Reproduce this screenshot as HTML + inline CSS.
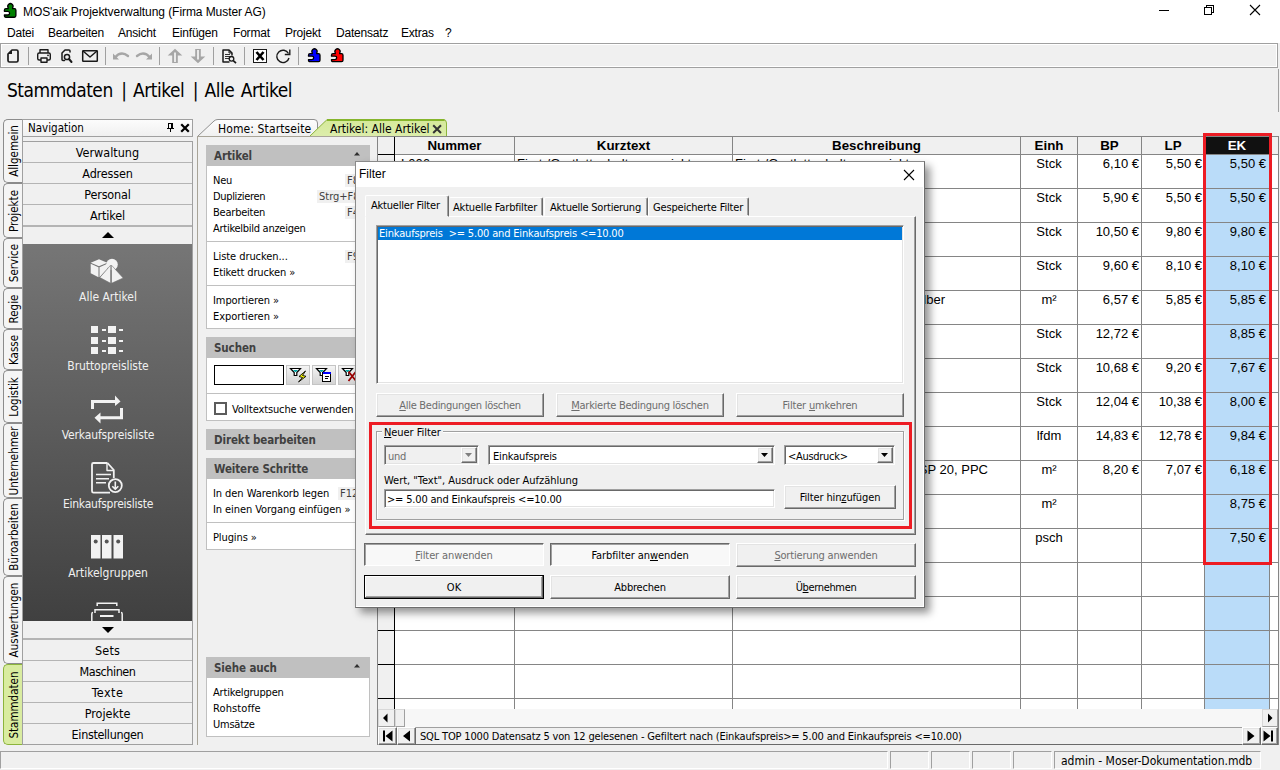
<!DOCTYPE html>
<html lang="de"><head><meta charset="utf-8"><title>MOS'aik Projektverwaltung</title>
<style>
*{box-sizing:border-box;margin:0;padding:0}
html,body{width:1280px;height:770px;overflow:hidden;background:#f0f0f0}
body{position:relative;font-family:"DejaVu Sans Condensed","Liberation Sans",sans-serif;font-size:11px;color:#000}
.a{position:absolute}
.t{position:absolute;white-space:nowrap;line-height:1}
.ui{font-family:"Liberation Sans",sans-serif}
svg{position:absolute;overflow:visible}
/* title + menu */
#title{left:0;top:0;width:1280px;height:22px;background:#fff}
#menu{left:0;top:22px;width:1280px;height:21px;background:#fff}
#menu .t{top:5px;font-size:12px;letter-spacing:-0.2px}
#toolbar{left:0;top:43px;width:1278px;height:25px;background:#f0f0f0;border:1px solid #a0a0a0;box-shadow:inset 1px 1px 0 #fff,inset -1px -1px 0 #fff}
#heading{left:7px;top:81px;font-size:19px;letter-spacing:-0.5px;word-spacing:1.6px}
#heading i{font-style:normal;margin-left:2px}
/* nav */
.vtab{position:absolute;left:3px;width:20px;background:#f5f5f5;border:1px solid #8c8c8c;border-right:0;border-radius:5px 0 0 5px}
.vtab span{position:absolute;left:calc(50% + 1px);top:50%;transform:translate(-50%,-50%) rotate(-90deg);white-space:nowrap;font-size:11.5px;line-height:1}
.navitem{position:absolute;left:23px;width:169px;height:21px;border-bottom:1px solid #b4b4b4;text-align:center;font-size:12.5px;line-height:22px;background:#f0f0f0}
.navlab{letter-spacing:-0.12px;position:absolute;left:23px;width:170px;text-align:center;color:#f0f0f0;font-size:12px;line-height:1;white-space:nowrap}
/* tabs/taskpane */
.ph{position:absolute;left:206px;width:164px;height:21px;background:#c0c0c0;color:#404040;font-weight:bold;font-size:11.5px;line-height:22px;padding-left:8px;letter-spacing:-0.1px}
.pb{position:absolute;left:206px;width:164px;background:#fff;border:1px solid #c0c0c0;border-top:0}
.pi{position:absolute;left:213px;white-space:nowrap;line-height:1;font-size:11px}
.sep{position:absolute;left:207px;width:162px;height:1px;background:#c0c0c0}
.sk{position:absolute;white-space:nowrap;line-height:13px;font-size:11px;background:#f0f0f0;color:#404040;padding:0 2px}
/* grid */
#grid{position:absolute;left:377px;top:136px;width:901px;height:573px;background:#fff;overflow:hidden}
.gl{position:absolute;background:#858585}
.gh{position:absolute;top:138px;text-align:center;font:bold 13.33px "Liberation Sans",sans-serif;line-height:15px;white-space:nowrap}
.gc{position:absolute;font:13px "Liberation Sans",sans-serif;line-height:15px;white-space:nowrap}
.r{text-align:right}.c{text-align:center}
/* classic controls */
.btn{position:absolute;background:#f0f0f0;border:1px solid;border-color:#fff #696969 #696969 #fff;box-shadow:inset -1px -1px 0 #a0a0a0,inset 1px 1px 0 #e3e3e3;text-align:center;font-size:11px;white-space:nowrap}
.btn.dis{color:#6d6d6d}
.sunk{position:absolute;background:#fff;border:1px solid;border-color:#a0a0a0 #fff #fff #a0a0a0;box-shadow:inset 1px 1px 0 #696969,inset -1px -1px 0 #e3e3e3}
u{text-decoration:underline;text-underline-offset:1px}
.dt{font-size:11px;letter-spacing:-0.17px}
.btn.pressed{border-color:#696969 #fff #fff #696969;box-shadow:inset 1px 1px 0 #a0a0a0;background:#f8f8f8}
.fb{position:absolute;top:365px;width:24px;height:20px;border:1px solid #c4c4c4;background:linear-gradient(#f4f4f4,#d4d4d4)}
.sp{position:absolute;top:751px;height:18px;border:1px solid;border-color:#a0a0a0 #fff #fff #a0a0a0}
.sb{position:absolute;background:#f0f0f0;border:1px solid;border-color:#d8d8d8 #a0a0a0 #a0a0a0 #d8d8d8}
</style></head><body>
<div id="title" class="a">
 <div class="t ui" style="left:23px;top:6px;font-size:12px;letter-spacing:-0.07px">MOS'aik Projektverwaltung (Firma Muster AG)</div>
</div>
<div id="menu" class="a ui">
 <div class="t" style="left:7px">Datei</div>
 <div class="t" style="left:48px">Bearbeiten</div>
 <div class="t" style="left:118px">Ansicht</div>
 <div class="t" style="left:172px">Einfügen</div>
 <div class="t" style="left:233px">Format</div>
 <div class="t" style="left:285px">Projekt</div>
 <div class="t" style="left:336px">Datensatz</div>
 <div class="t" style="left:401px">Extras</div>
 <div class="t" style="left:445px">?</div>
</div>
<div id="toolbar" class="a"></div>
<div id="heading" class="t">Stammdaten <i>|</i> Artikel <i>|</i> Alle Artikel</div>
<!-- title icon + window buttons -->
<svg style="left:0;top:0" width="1280" height="22" viewBox="0 0 1280 22">
 <g id="pz" style="color:#008000" transform="translate(-0.100,-1.500) scale(1,1.070)">
  <path d="M8.300 9.500 V8.700 A2.600 2.600 0 1 1 12.700 8.700 V9.500 H14.500 Q16 9.500 16 11 V16 Q16 17.500 14.500 17.500 H6 Q4.500 17.500 4.500 16 V15.400 H8 A1.700 1.700 0 0 0 8 12 H4.500 V11 Q4.500 9.500 6 9.500 Z" fill="currentColor" stroke="#000" stroke-width="1.300" stroke-linejoin="round"/>
 </g>
 <path d="M1159 10.5 H1169" stroke="#000" stroke-width="1"/>
 <path d="M1204.5 7.5 h7 v7 h-7 Z M1206.5 7.5 v-2 h7 v7 h-2" stroke="#000" stroke-width="1" fill="none" shape-rendering="crispEdges"/>
 <path d="M1250 5 L1260 15 M1260 5 L1250 15" stroke="#000" stroke-width="1.1" fill="none"/>
</svg>
<!-- toolbar icons -->
<svg style="left:0;top:44px" width="360" height="24" viewBox="0 44 360 24">
 <g stroke="#a0a0a0" stroke-width="1" shape-rendering="crispEdges"><path d="M28.5 47 V65 M105.5 47 V65 M159.5 47 V65 M213.5 47 V65 M244.5 47 V65 M298.5 47 V65"/></g>
 <!-- new -->
 <path d="M12 50 H16.5 Q18 50 18 51.5 V60.5 Q18 62 16.5 62 H9.5 Q8 62 8 60.5 V54 Z" fill="none" stroke="#1a1a1a" stroke-width="1.7" stroke-linejoin="round"/>
 <path d="M8 54 L12 54 L12 50 Z" fill="#1a1a1a"/>
 <!-- print -->
 <g fill="none" stroke="#1a1a1a" stroke-width="1.4" stroke-linejoin="round">
  <path d="M40 53 V49.7 H48 V53"/>
  <rect x="37.7" y="53" width="12.6" height="7" rx="1.5"/>
  <rect x="41" y="58" width="6" height="4.3" fill="#f0f0f0"/>
 </g>
 <circle cx="48" cy="55.3" r="0.9" fill="#1a1a1a"/>
 <!-- preview -->
 <g fill="none" stroke="#1a1a1a" stroke-width="1.5" stroke-linejoin="round" stroke-linecap="round">
  <path d="M64.5 60.5 H63 Q62 60.500 62 59.500 V53 L65 50 H69 Q70 50 70 51 V52"/>
  <circle cx="67" cy="57" r="2.6"/>
  <path d="M69 59 L71.500 62" stroke-width="2"/>
 </g>
 <!-- mail -->
 <g fill="none" stroke="#1a1a1a" stroke-width="1.5" stroke-linejoin="round">
  <rect x="82.7" y="50.700" width="14.600" height="10.600" rx="0.500"/>
  <path d="M83 51 L90 57 L97 51"/>
 </g>
 <!-- undo / redo -->
 <g fill="none" stroke="#a6a6a6" stroke-width="2.400" stroke-linecap="round">
  <path d="M115 57.5 Q121 50.500 128 56"/>
  <path d="M150 57.5 Q144 50.500 137 56"/>
 </g>
 <path d="M113 53.5 L113 59.500 L119 59.500 Z M152 53.5 L152 59.500 L146 59.500 Z" fill="#a6a6a6"/>
 <!-- up / down -->
 <path d="M175 48.800 L182.300 55.500 H177.800 V63 H172.200 V55.500 H167.700 Z M198 63.200 L205.300 56.500 H200.800 V49 H195.200 V56.500 H190.700 Z" fill="#a6a6a6"/>
 <path d="M175 52.500 V62 M198 50 V59.500" stroke="#fff" stroke-width="1.500" fill="none"/>
 <!-- doc search -->
 <g fill="none" stroke="#1a1a1a" stroke-width="1.500" stroke-linejoin="round">
  <path d="M229.500 62 H223 V50 H229 L232 53 V55.500"/>
  <path d="M229 50 V53 H232" stroke-width="1"/>
 </g>
 <g shape-rendering="crispEdges" fill="#333"><rect x="225" y="54" width="5" height="1"/><rect x="225" y="56" width="5" height="1"/><rect x="225" y="58" width="4" height="1"/></g>
 <circle cx="231.500" cy="58.800" r="2.300" fill="#f0f0f0" stroke="#1a1a1a" stroke-width="1.300"/>
 <path d="M233.300 60.600 L236 63.200" stroke="#1a1a1a" stroke-width="1.700"/>
 <!-- excel -->
 <rect x="253.500" y="49.500" width="13" height="13" fill="#fff" stroke="#1a1a1a" stroke-width="1"/>
 <path d="M256.500 52 L263.500 60 M263.500 52 L256.500 60" stroke="#000" stroke-width="2.600" fill="none"/>
 <!-- refresh -->
 <path d="M288.500 53.5 A6.200 6.200 0 1 0 289 58" fill="none" stroke="#1a1a1a" stroke-width="1.400"/>
 <path d="M289.800 49.500 V54.500 H284.800" fill="none" stroke="#1a1a1a" stroke-width="1.400"/>
 <!-- puzzles -->
 <g style="color:#0000ff" transform="translate(304,44.150)">
  <path d="M8.300 9.500 V8.700 A2.600 2.600 0 1 1 12.700 8.700 V9.500 H14.500 Q16 9.500 16 11 V16 Q16 17.500 14.500 17.500 H6 Q4.500 17.500 4.500 16 V15.400 H8 A1.700 1.700 0 0 0 8 12 H4.500 V11 Q4.500 9.500 6 9.500 Z" fill="currentColor" stroke="#000" stroke-width="1.300" stroke-linejoin="round"/>
 </g>
 <g style="color:#ff0000" transform="translate(327,44.150)">
  <path d="M8.300 9.500 V8.700 A2.600 2.600 0 1 1 12.700 8.700 V9.500 H14.500 Q16 9.500 16 11 V16 Q16 17.500 14.500 17.500 H6 Q4.500 17.500 4.500 16 V15.400 H8 A1.700 1.700 0 0 0 8 12 H4.500 V11 Q4.500 9.500 6 9.500 Z" fill="currentColor" stroke="#000" stroke-width="1.300" stroke-linejoin="round"/>
 </g>
</svg>
<!-- vertical tabs -->
<div class="vtab" style="top:119px;height:64px"><span>Allgemein</span></div>
<div class="vtab" style="top:183px;height:55px"><span>Projekte</span></div>
<div class="vtab" style="top:238px;height:50px"><span>Service</span></div>
<div class="vtab" style="top:288px;height:41px"><span>Regie</span></div>
<div class="vtab" style="top:329px;height:41px"><span>Kasse</span></div>
<div class="vtab" style="top:370px;height:53px"><span>Logistik</span></div>
<div class="vtab" style="top:423px;height:75px"><span>Unternehmer</span></div>
<div class="vtab" style="top:498px;height:78px"><span>Büroarbeiten</span></div>
<div class="vtab" style="top:576px;height:88px"><span>Auswertungen</span></div>
<div class="vtab" style="top:664px;height:81px;background:#d9eca0;border-color:#8cb43c"><span>Stammdaten</span></div>
<div class="a" style="left:22px;top:119px;width:1px;height:626px;background:#a0a0a0"></div>
<!-- nav header -->
<div class="a" style="left:22px;top:119px;width:171px;height:18px;border:1px solid #a0a0a0;background:linear-gradient(#fcfcfc,#f0f0f0)"></div>
<div class="t" style="left:28px;top:123px;font-size:11.5px">Navigation</div>
<!-- nav list -->
<div class="a" style="left:22px;top:141px;width:171px;height:604px;border:1px solid #a0a0a0;background:#f0f0f0"></div>
<div class="navitem" style="top:142px;letter-spacing:0.0px">Verwaltung</div>
<div class="navitem" style="top:163px;letter-spacing:-0.17px">Adressen</div>
<div class="navitem" style="top:184px;letter-spacing:-0.17px">Personal</div>
<div class="navitem" style="top:205px;border-bottom:2px solid #b4b4b4;height:22px;letter-spacing:-0.14px">Artikel</div>
<div class="a" style="left:23px;top:244px;width:169px;height:377px;background:linear-gradient(#767676,#404040)"></div>
<div class="navlab" style="top:291px;letter-spacing:0.0px">Alle Artikel</div>
<div class="navlab" style="top:360px;letter-spacing:-0.08px">Bruttopreisliste</div>
<div class="navlab" style="top:429px;letter-spacing:-0.16px">Verkaufspreisliste</div>
<div class="navlab" style="top:498px;letter-spacing:-0.23px">Einkaufspreisliste</div>
<div class="navlab" style="top:567px;letter-spacing:-0.01px">Artikelgruppen</div>
<div class="navitem" style="top:638px;border-top:2px solid #b4b4b4;height:23px;line-height:22px;letter-spacing:0.11px">Sets</div>
<div class="navitem" style="top:661px;letter-spacing:-0.45px">Maschinen</div>
<div class="navitem" style="top:682px;letter-spacing:0.45px">Texte</div>
<div class="navitem" style="top:703px;letter-spacing:0.0px">Projekte</div>
<div class="navitem" style="top:724px;border-bottom:0;height:20px;letter-spacing:-0.34px">Einstellungen</div>
<svg style="left:23px;top:244px" width="170" height="378" viewBox="23 244 170 378">
 <g fill="#f2f2f2">
  <!-- alle artikel: cube, sphere, pyramid -->
  <circle cx="112" cy="264.500" r="5.800"/>
  <path d="M99 259.300 L107.300 262.800 L99 266.300 L90.700 262.800 Z"/>
  <path d="M90.700 263.800 L98.500 267.200 L98.500 277.300 L90.700 273.300 Z"/>
  <path d="M99.500 267.200 L107.300 263.800 L107.300 269 L99.500 277.300 Z"/>
  <path d="M110.600 265.200 L110.600 283.300 L99.800 277.500 Z" stroke="#6e6e6e" stroke-width="0.600"/>
  <path d="M111.500 265.200 L123.200 278 L111.500 283.300 Z" stroke="#6e6e6e" stroke-width="0.600"/>
  <!-- brutto: grid -->
  <g shape-rendering="crispEdges">
   <rect x="91" y="326" width="7" height="7"/><rect x="108" y="326" width="8" height="7"/><rect x="102" y="329" width="4" height="2"/><rect x="119" y="329" width="4" height="2"/>
   <rect x="91" y="337" width="7" height="7"/><rect x="108" y="337" width="8" height="7"/><rect x="102" y="340" width="4" height="2"/><rect x="119" y="340" width="4" height="2"/>
   <rect x="91" y="347" width="7" height="7"/><rect x="108" y="347" width="8" height="7"/><rect x="102" y="350" width="4" height="2"/><rect x="119" y="350" width="4" height="2"/>
  </g>
  <!-- verkauf: arrows -->
  <path d="M91 400 H115 V395.500 L120.500 401.500 L115 406 V403 H94 V409 H91 Z"/>
  <path d="M123 419.300 H100.500 V423.500 L94.500 417.800 L100.500 412.500 V416.300 H120 V408 H123 Z"/>
  <!-- binders -->
  <path d="M91 535 h9.500 v23.600 h-9.500 Z M102 535 h9.500 v23.600 h-9.500 Z M113.500 535 h9.500 v23.600 h-9.500 Z"/>
 </g>
 <g fill="#555"><circle cx="95.700" cy="541.400" r="2"/><circle cx="106.700" cy="541.400" r="2"/><circle cx="118.200" cy="541.400" r="2"/></g>
 <!-- einkauf: doc + download -->
 <g fill="none" stroke="#f2f2f2" stroke-width="1.800" stroke-linejoin="round">
  <path d="M107.500 463 H93.500 Q92 463 92 464.500 V491 Q92 492.600 93.500 492.600 H110"/>
  <path d="M107.500 463 L113.800 470 V478"/>
  <path d="M107 463.500 V470.500 H113.500" stroke-width="1.400"/>
  <path d="M96 474.500 H111 M96 478.700 H109 M96 482.800 H106" stroke-width="1.500"/>
  <circle cx="115.300" cy="485.600" r="6.500" fill="#4e4e4e"/>
  <path d="M115.300 481.500 V489 M112.300 486.200 L115.300 489.300 L118.300 486.200" stroke-width="1.600"/>
 </g>
 <!-- sets (cut off) -->
 <g fill="none" stroke="#f2f2f2" stroke-width="1.500">
  <path d="M97.200 606 V603.300 H116.800 V606"/>
  <path d="M95 613 V609.800 H119 V613"/>
  <path d="M100 616 H113.500" stroke-width="2"/>
  <path d="M91.800 622 V614 Q91.800 612.500 93 612.500 M122.200 622 V614 Q122.200 612.500 121 612.500"/>
 </g>
</svg>
<!-- nav arrows -->
<svg style="left:23px;top:226px" width="170" height="18" viewBox="0 0 170 18"><path d="M79 12 L85 6 L91 12 Z" fill="#000"/></svg>
<svg style="left:23px;top:622px" width="170" height="17" viewBox="0 0 170 17"><path d="M79 5 L91 5 L85 11 Z" fill="#000"/></svg>
<!-- nav header pin + close -->
<svg style="left:160px;top:119px" width="33" height="18" viewBox="160 119 33 18">
 <g shape-rendering="crispEdges"><path d="M168 123 h5 v5 h1 v1 h-3 v3 h-1 v-3 h-3 v-1 h1 Z" fill="#000"/><rect x="169" y="124" width="2" height="4" fill="#f4f4f4"/></g>
 <path d="M182 125 L188 131 M188 125 L182 131" stroke="#000" stroke-width="2.200" stroke-linecap="square"/>
</svg>
<!-- tab strip -->
<svg style="left:196px;top:118px" width="260" height="20" viewBox="196 118 260 20">
 <defs><linearGradient id="tg" x1="0" y1="0" x2="0" y2="1"><stop offset="0" stop-color="#fdfdfd"/><stop offset="1" stop-color="#f0f0f0"/></linearGradient>
 <linearGradient id="gg" x1="0" y1="0" x2="0" y2="1"><stop offset="0" stop-color="#d5e99a"/><stop offset="1" stop-color="#dcedab"/></linearGradient></defs>
 <path d="M197.500 136.500 L214 121 Q215.500 119.500 218 119.500 L314 119.500 Q317.500 119.500 317.500 123 L317.500 136.500 Z" fill="url(#tg)" stroke="#909090"/>
 <path d="M309.500 136.500 L325 121.500 Q326.500 119.500 329 119.500 L443 119.500 Q446.500 119.500 446.500 123 L446.500 136.500 Z" fill="url(#gg)" stroke="#8cb43c"/>
 <path d="M327 120 H444.500" stroke="#86b52c" stroke-width="2"/>
</svg>
<div class="t" style="left:218px;top:123px;font-size:12px;letter-spacing:0.11px">Home: Startseite</div>
<div class="t" style="left:330px;top:123px;font-size:12px;letter-spacing:0px">Artikel: Alle Artikel</div>
<svg style="left:432px;top:124px" width="10" height="10" viewBox="0 0 10 10"><path d="M1.200 1.200 L9 9 M9 1.200 L1.200 9" stroke="#333" stroke-width="2" fill="none"/></svg>
<!-- task pane -->
<div class="a" style="left:197px;top:136px;width:181px;height:609px;border:1px solid #a8a498;border-right:0;border-bottom:0;background:#f0f0f0"></div>
<div class="ph" style="top:145px">Artikel</div>
<svg style="left:354px;top:152px" width="6" height="4"><path d="M0 3.500 L3 0 L6 3.500 Z" fill="#303030"/></svg>
<div class="pb" style="top:166px;height:163px"></div>
<div class="pi" style="top:175px;letter-spacing:-0.19px">Neu</div><div class="sk" style="left:345px;top:174px">F8</div>
<div class="pi" style="top:191px;letter-spacing:-0.34px">Duplizieren</div><div class="sk" style="left:317px;top:190px">Strg+F8</div>
<div class="pi" style="top:207px;letter-spacing:-0.22px">Bearbeiten</div><div class="sk" style="left:345px;top:206px">F4</div>
<div class="pi" style="top:223px;letter-spacing:-0.27px">Artikelbild anzeigen</div>
<div class="sep" style="top:241px"></div>
<div class="pi" style="top:251px;letter-spacing:-0.06px">Liste drucken...</div><div class="sk" style="left:345px;top:250px">F9</div>
<div class="pi" style="top:267px;letter-spacing:-0.12px">Etikett drucken »</div>
<div class="sep" style="top:285px"></div>
<div class="pi" style="top:295px;letter-spacing:-0.08px">Importieren »</div>
<div class="pi" style="top:311px;letter-spacing:-0.05px">Exportieren »</div>
<div class="ph" style="top:337px">Suchen</div>
<div class="pb" style="top:358px;height:63px"></div>
<div class="a" style="left:214px;top:365px;width:70px;height:20px;border:1px solid #000;background:#fff"></div>
<div class="fb" style="left:286px"></div><div class="fb" style="left:312px"></div><div class="fb" style="left:338px"></div>
<svg style="left:286px;top:365px" width="80" height="20" viewBox="286 365 80 20">
 <g id="fn"><path d="M290.500 368.500 H300.500 L296.800 372.500 V375.500 H294.200 V372.500 Z" fill="#fff" stroke="#000" stroke-width="1.200" stroke-linejoin="miter"/><path d="M293 370 h5 l-2 2 h-1 Z" fill="#00a8a8"/></g>
 <path d="M305.500 371 L299 376.500 L302.500 377.500 L298.500 382 L306 376.300 L302.500 375.500 Z" fill="#ffff00" stroke="#000" stroke-width="0.900" stroke-linejoin="round"/>
 <use href="#fn" x="26"/>
 <g shape-rendering="crispEdges"><rect x="322.500" y="372.500" width="8" height="9" fill="#fff" stroke="#000"/><rect x="323" y="372" width="8" height="2" fill="#0000ff"/><path d="M325 376.500 h4 M325 378.500 h3" stroke="#000"/></g>
 <use href="#fn" x="52"/>
 <path d="M348.500 371.500 L356 381 M356 371.500 L348.500 381" stroke="#990000" stroke-width="1.800" fill="none"/>
</svg>
<div class="sep" style="top:393px"></div>
<div class="a" style="left:214px;top:402px;width:13px;height:13px;border:2px solid #5c5c5c;background:#fff"></div>
<div class="pi" style="left:232px;top:404px;letter-spacing:-0.13px">Volltextsuche verwenden</div>
<div class="ph" style="top:429px">Direkt bearbeiten</div>
<div class="ph" style="top:458px">Weitere Schritte</div>
<div class="pb" style="top:479px;height:71px"></div>
<div class="pi" style="top:488px;letter-spacing:-0.07px">In den Warenkorb legen</div><div class="sk" style="left:338px;top:487px">F12</div>
<div class="pi" style="top:504px;letter-spacing:-0.08px">In einen Vorgang einfügen »</div>
<div class="sep" style="top:522px"></div>
<div class="pi" style="top:532px;letter-spacing:-0.11px">Plugins »</div>
<div class="ph" style="top:657px">Siehe auch</div>
<svg style="left:354px;top:664px" width="6" height="4"><path d="M0 3.500 L3 0 L6 3.500 Z" fill="#303030"/></svg>
<div class="pb" style="top:678px;height:59px"></div>
<div class="pi" style="top:687px;letter-spacing:-0.18px">Artikelgruppen</div>
<div class="pi" style="top:703px;letter-spacing:0.10px">Rohstoffe</div>
<div class="pi" style="top:719px;letter-spacing:-0.23px">Umsätze</div>
<!-- grid -->
<div class="a" style="left:377px;top:136px;width:902px;height:573px;background:#fff"></div>
<div class="a" style="left:377px;top:136px;width:902px;height:19px;background:#f0f0f0"></div>
<div class="a" style="left:377px;top:136px;width:18px;height:573px;background:#f0f0f0"></div>
<div class="a" style="left:1205px;top:155px;width:64px;height:554px;background:#badcf9"></div>
<div class="a" style="left:1205px;top:137px;width:64px;height:17px;background:#111"></div>
<div class="gl" style="left:377px;top:136px;width:902px;height:1px"></div>
<div class="gl" style="left:395px;top:154px;width:883px;height:1px"></div>
<div class="a" style="left:378px;top:154px;width:17px;height:1px;background:#000"></div>
<div class="gl" style="left:395px;top:188px;width:883px;height:1px"></div>
<div class="a" style="left:378px;top:188px;width:17px;height:1px;background:#000"></div>
<div class="gl" style="left:395px;top:222px;width:883px;height:1px"></div>
<div class="a" style="left:378px;top:222px;width:17px;height:1px;background:#000"></div>
<div class="gl" style="left:395px;top:256px;width:883px;height:1px"></div>
<div class="a" style="left:378px;top:256px;width:17px;height:1px;background:#000"></div>
<div class="gl" style="left:395px;top:290px;width:883px;height:1px"></div>
<div class="a" style="left:378px;top:290px;width:17px;height:1px;background:#000"></div>
<div class="gl" style="left:395px;top:324px;width:883px;height:1px"></div>
<div class="a" style="left:378px;top:324px;width:17px;height:1px;background:#000"></div>
<div class="gl" style="left:395px;top:358px;width:883px;height:1px"></div>
<div class="a" style="left:378px;top:358px;width:17px;height:1px;background:#000"></div>
<div class="gl" style="left:395px;top:392px;width:883px;height:1px"></div>
<div class="a" style="left:378px;top:392px;width:17px;height:1px;background:#000"></div>
<div class="gl" style="left:395px;top:426px;width:883px;height:1px"></div>
<div class="a" style="left:378px;top:426px;width:17px;height:1px;background:#000"></div>
<div class="gl" style="left:395px;top:460px;width:883px;height:1px"></div>
<div class="a" style="left:378px;top:460px;width:17px;height:1px;background:#000"></div>
<div class="gl" style="left:395px;top:494px;width:883px;height:1px"></div>
<div class="a" style="left:378px;top:494px;width:17px;height:1px;background:#000"></div>
<div class="gl" style="left:395px;top:528px;width:883px;height:1px"></div>
<div class="a" style="left:378px;top:528px;width:17px;height:1px;background:#000"></div>
<div class="gl" style="left:395px;top:562px;width:883px;height:1px"></div>
<div class="a" style="left:378px;top:562px;width:17px;height:1px;background:#000"></div>
<div class="gl" style="left:395px;top:596px;width:883px;height:1px"></div>
<div class="a" style="left:378px;top:596px;width:17px;height:1px;background:#000"></div>
<div class="gl" style="left:395px;top:630px;width:883px;height:1px"></div>
<div class="a" style="left:378px;top:630px;width:17px;height:1px;background:#000"></div>
<div class="gl" style="left:395px;top:664px;width:883px;height:1px"></div>
<div class="a" style="left:378px;top:664px;width:17px;height:1px;background:#000"></div>
<div class="gl" style="left:395px;top:698px;width:883px;height:1px"></div>
<div class="a" style="left:378px;top:698px;width:17px;height:1px;background:#000"></div>
<div class="gl" style="left:377px;top:136px;width:1px;height:573px"></div>
<div class="a" style="left:394px;top:137px;width:1px;height:572px;background:#000"></div>
<div class="gl" style="left:514px;top:137px;width:1px;height:572px"></div>
<div class="gl" style="left:732px;top:137px;width:1px;height:572px"></div>
<div class="gl" style="left:1020px;top:137px;width:1px;height:572px"></div>
<div class="gl" style="left:1077px;top:137px;width:1px;height:572px"></div>
<div class="gl" style="left:1141px;top:137px;width:1px;height:572px"></div>
<div class="gl" style="left:1204px;top:137px;width:1px;height:572px"></div>
<div class="gl" style="left:1269px;top:137px;width:1px;height:572px"></div>
<div class="gh" style="left:395px;width:119px">Nummer</div>
<div class="gh" style="left:515px;width:217px">Kurztext</div>
<div class="gh" style="left:733px;width:287px">Beschreibung</div>
<div class="gh" style="left:1021px;width:56px">Einh</div>
<div class="gh" style="left:1078px;width:63px">BP</div>
<div class="gh" style="left:1142px;width:62px">LP</div>
<div class="gh" style="left:1205px;width:64px;color:#fff">EK</div>
<div class="gc" style="left:401px;top:156px">L006</div>
<div class="gc" style="left:517px;top:156px">First-/Gratlattenhalter, verzinkt</div>
<div class="gc" style="left:735px;top:156px">First-/Gratlattenhalter, verzinkt</div>
<div class="gc c" style="left:1021px;width:56px;top:156px">Stck</div>
<div class="gc r" style="left:1078px;width:61px;top:156px">6,10 €</div>
<div class="gc r" style="left:1142px;width:60px;top:156px">5,50 €</div>
<div class="gc r" style="left:1206px;width:60px;top:156px">5,50 €</div>
<div class="gc" style="left:401px;top:190px">L007</div>
<div class="gc" style="left:517px;top:190px">First-/Gratlattenhalter, Edelstahl</div>
<div class="gc" style="left:735px;top:190px">First-/Gratlattenhalter, Edelstahl</div>
<div class="gc c" style="left:1021px;width:56px;top:190px">Stck</div>
<div class="gc r" style="left:1078px;width:61px;top:190px">5,90 €</div>
<div class="gc r" style="left:1142px;width:60px;top:190px">5,50 €</div>
<div class="gc r" style="left:1206px;width:60px;top:190px">5,50 €</div>
<div class="gc" style="left:401px;top:224px">L012</div>
<div class="gc" style="left:517px;top:224px">Schneefanggitter, 200 mm</div>
<div class="gc" style="left:735px;top:224px">Schneefanggitter, 200 mm hoch</div>
<div class="gc c" style="left:1021px;width:56px;top:224px">Stck</div>
<div class="gc r" style="left:1078px;width:61px;top:224px">10,50 €</div>
<div class="gc r" style="left:1142px;width:60px;top:224px">9,80 €</div>
<div class="gc r" style="left:1206px;width:60px;top:224px">9,80 €</div>
<div class="gc" style="left:401px;top:258px">L015</div>
<div class="gc" style="left:517px;top:258px">Schneefangstütze, verzinkt</div>
<div class="gc" style="left:735px;top:258px">Schneefangstütze für Ziegel</div>
<div class="gc c" style="left:1021px;width:56px;top:258px">Stck</div>
<div class="gc r" style="left:1078px;width:61px;top:258px">9,60 €</div>
<div class="gc r" style="left:1142px;width:60px;top:258px">8,10 €</div>
<div class="gc r" style="left:1206px;width:60px;top:258px">8,10 €</div>
<div class="gc" style="left:401px;top:292px">D021</div>
<div class="gc" style="left:517px;top:292px">Unterspannbahn, diffusionsoffen</div>
<div class="gc" style="right:335px;top:292px">Unterspannbahn, diffusionsoffen, silber</div>
<div class="gc c" style="left:1021px;width:56px;top:292px">m²</div>
<div class="gc r" style="left:1078px;width:61px;top:292px">6,57 €</div>
<div class="gc r" style="left:1142px;width:60px;top:292px">5,85 €</div>
<div class="gc r" style="left:1206px;width:60px;top:292px">5,85 €</div>
<div class="gc" style="left:401px;top:326px">L033</div>
<div class="gc" style="left:517px;top:326px">Dachfenster, Kunststoff</div>
<div class="gc" style="left:735px;top:326px">Dachfenster aus Kunststoff</div>
<div class="gc c" style="left:1021px;width:56px;top:326px">Stck</div>
<div class="gc r" style="left:1078px;width:61px;top:326px">12,72 €</div>
<div class="gc r" style="left:1206px;width:60px;top:326px">8,85 €</div>
<div class="gc" style="left:401px;top:360px">L034</div>
<div class="gc" style="left:517px;top:360px">Dachfenster, Holz</div>
<div class="gc" style="left:735px;top:360px">Dachfenster aus Holz, lackiert</div>
<div class="gc c" style="left:1021px;width:56px;top:360px">Stck</div>
<div class="gc r" style="left:1078px;width:61px;top:360px">10,68 €</div>
<div class="gc r" style="left:1142px;width:60px;top:360px">9,20 €</div>
<div class="gc r" style="left:1206px;width:60px;top:360px">7,67 €</div>
<div class="gc" style="left:401px;top:394px">L040</div>
<div class="gc" style="left:517px;top:394px">Lichtkuppel, rund</div>
<div class="gc" style="left:735px;top:394px">Lichtkuppel rund, zweischalig</div>
<div class="gc c" style="left:1021px;width:56px;top:394px">Stck</div>
<div class="gc r" style="left:1078px;width:61px;top:394px">12,04 €</div>
<div class="gc r" style="left:1142px;width:60px;top:394px">10,38 €</div>
<div class="gc r" style="left:1206px;width:60px;top:394px">8,00 €</div>
<div class="gc" style="left:401px;top:428px">R011</div>
<div class="gc" style="left:517px;top:428px">Regenrinne, halbrund</div>
<div class="gc" style="left:735px;top:428px">Regenrinne halbrund, Titanzink</div>
<div class="gc c" style="left:1021px;width:56px;top:428px">lfdm</div>
<div class="gc r" style="left:1078px;width:61px;top:428px">14,83 €</div>
<div class="gc r" style="left:1142px;width:60px;top:428px">12,78 €</div>
<div class="gc r" style="left:1206px;width:60px;top:428px">9,84 €</div>
<div class="gc" style="left:401px;top:462px">D044</div>
<div class="gc" style="left:517px;top:462px">Bitumenbahn, besandet</div>
<div class="gc" style="right:292px;top:462px">Bitumenbahn, V 60 S4, KSP 20, PPC</div>
<div class="gc c" style="left:1021px;width:56px;top:462px">m²</div>
<div class="gc r" style="left:1078px;width:61px;top:462px">8,20 €</div>
<div class="gc r" style="left:1142px;width:60px;top:462px">7,07 €</div>
<div class="gc r" style="left:1206px;width:60px;top:462px">6,18 €</div>
<div class="gc" style="left:401px;top:496px">D051</div>
<div class="gc" style="left:517px;top:496px">Dampfsperre, Alu</div>
<div class="gc" style="left:735px;top:496px">Dampfsperre Alu, kaschiert</div>
<div class="gc c" style="left:1021px;width:56px;top:496px">m²</div>
<div class="gc r" style="left:1206px;width:60px;top:496px">8,75 €</div>
<div class="gc" style="left:401px;top:530px">P002</div>
<div class="gc" style="left:517px;top:530px">Kleinmaterial, pauschal</div>
<div class="gc" style="left:735px;top:530px">Kleinmaterial pauschal</div>
<div class="gc c" style="left:1021px;width:56px;top:530px">psch</div>
<div class="gc r" style="left:1206px;width:60px;top:530px">7,50 €</div>
<div class="a" style="left:1203px;top:133px;width:69px;height:432px;border:3px solid #ed1c24"></div>
<div class="gl" style="left:1278px;top:136px;width:1px;height:609px"></div>
<div class="a" style="left:1278px;top:69px;width:1px;height:43px;background:#a0a0a0"></div>
<!-- hscroll -->
<div class="a" style="left:378px;top:709px;width:900px;height:18px;background:#f7f7f7"></div>
<div class="sb" style="left:378px;top:709px;width:17px;height:18px"></div>
<div class="sb" style="left:395px;top:709px;width:10px;height:18px"></div>
<div class="sb" style="left:1262px;top:709px;width:16px;height:18px"></div>
<svg style="left:378px;top:709px" width="900" height="18"><path d="M9.500 4.500 L5 9 L9.500 13.500 Z M890 4.500 L894.500 9 L890 13.500 Z" fill="#000"/></svg>
<div class="gl" style="left:377px;top:709px;width:1px;height:36px"></div>
<!-- record nav -->
<div class="a" style="left:378px;top:727px;width:900px;height:18px;background:#f0f0f0;border-bottom:1px solid #696969;border-top:1px solid #a0a0a0"></div>
<div class="btn" style="left:378px;top:727px;width:19px;height:18px"></div>
<div class="btn" style="left:397px;top:727px;width:19px;height:18px"></div>
<div class="btn" style="left:1242px;top:727px;width:19px;height:18px"></div>
<div class="btn" style="left:1261px;top:727px;width:17px;height:18px"></div>
<svg style="left:378px;top:727px" width="900" height="18"><path d="M5 3.500 h2 v11 h-2 Z M14.500 3.500 L7.500 9 L14.500 14.500 Z M32 3.500 L25 9 L32 14.500 Z M869.500 3.500 L876.500 9 L869.500 14.500 Z M885.500 3.500 L892.500 9 L885.500 14.500 Z M893 3.500 h2 v11 h-2 Z" fill="#000"/></svg>
<div class="t" style="left:420px;top:731px;font-size:11px;letter-spacing:-0.17px">SQL TOP 1000 Datensatz 5 von 12 gelesenen - Gefiltert nach (Einkaufspreis&gt;= 5.00 and Einkaufspreis &lt;=10.00)</div>
<!-- status bar -->
<div class="sp" style="left:0;width:888px"></div>
<div class="sp" style="left:890px;width:39px"></div>
<div class="sp" style="left:931px;width:39px"></div>
<div class="sp" style="left:972px;width:39px"></div>
<div class="sp" style="left:1013px;width:39px"></div>
<div class="sp" style="left:1054px;width:207px"></div>
<div class="t" style="left:1061px;top:755px;font-size:12px;letter-spacing:0px">admin - Moser-Dokumentation.mdb</div>
<!-- dialog -->
<div class="a" id="dlg" style="left:355px;top:161px;width:570px;height:447px;background:#f0f0f0;border:1px solid;border-color:#8a8a8a #6e6e6e #6e6e6e #8a8a8a;box-shadow:5px 5px 8px 0 rgba(0,0,0,.42),inset -1px -1px 0 #fff"></div>
<div class="a" style="left:356px;top:162px;width:568px;height:25px;background:#fff"></div>
<div class="t ui" style="left:359px;top:168px;font-size:12px">Filter</div>
<svg style="left:903px;top:169px" width="12" height="12" viewBox="0 0 12 12"><path d="M1 1 L11 11 M11 1 L1 11" stroke="#000" stroke-width="1.1" fill="none"/></svg>
<!-- tab page frame -->
<div class="a" style="left:365px;top:216px;width:551px;height:319px;border:1px solid;border-color:#fff #696969 #696969 #fff;box-shadow:inset -1px -1px 0 #a0a0a0"></div>
<!-- tabs -->
<div class="a" style="left:365px;top:195px;width:84px;height:22px;background:#f0f0f0;border:1px solid;border-color:#fff #696969 #f0f0f0 #fff;border-radius:2px 2px 0 0;box-shadow:inset -1px 0 0 #a0a0a0"></div>
<div class="a" style="left:449px;top:197px;width:94px;height:19px;border:1px solid;border-color:#fff #696969 transparent #f0f0f0;border-radius:2px 2px 0 0;box-shadow:inset -1px 0 0 #a0a0a0"></div>
<div class="a" style="left:544px;top:197px;width:104px;height:19px;border:1px solid;border-color:#fff #696969 transparent #fff;border-radius:2px 2px 0 0;box-shadow:inset -1px 0 0 #a0a0a0"></div>
<div class="a" style="left:648px;top:197px;width:101px;height:19px;border:1px solid;border-color:#fff #696969 transparent #fff;border-radius:2px 2px 0 0;box-shadow:inset -1px 0 0 #a0a0a0"></div>
<div class="t dt" style="left:371px;top:200px;letter-spacing:-0.2px">Aktueller Filter</div>
<div class="t dt" style="left:453px;top:202px;letter-spacing:-0.18px">Aktuelle Farbfilter</div>
<div class="t dt" style="left:550px;top:202px;letter-spacing:-0.24px">Aktuelle Sortierung</div>
<div class="t dt" style="left:653px;top:202px;letter-spacing:-0.18px">Gespeicherte Filter</div>
<!-- listbox -->
<div class="sunk" style="left:376px;top:225px;width:528px;height:159px"></div>
<div class="a" style="left:378px;top:227px;width:524px;height:13px;background:#0078d7"></div>
<div class="t dt" style="left:379px;top:228px;color:#fff;letter-spacing:-0.17px">Einkaufspreis&nbsp; &gt;= 5.00 and Einkaufspreis &lt;=10.00</div>
<!-- row of buttons -->
<div class="btn dis dt" style="left:376px;top:393px;width:168px;height:24px;line-height:24px;letter-spacing:-0.29px"><u>A</u>lle Bedingungen löschen</div>
<div class="btn dis dt" style="left:556px;top:393px;width:168px;height:24px;line-height:24px;letter-spacing:-0.28px"><u>M</u>arkierte Bedingung löschen</div>
<div class="btn dis dt" style="left:736px;top:393px;width:168px;height:24px;line-height:24px;letter-spacing:-0.17px">Filter <u>u</u>mkehren</div>
<!-- red highlight -->
<div class="a" style="left:369px;top:422px;width:543px;height:107px;border:3px solid #ed1c24"></div>
<!-- group box -->
<div class="a" style="left:376px;top:431px;width:528px;height:89px;border:1px solid #a0a0a0;box-shadow:1px 1px 0 #fff,inset 1px 1px 0 #fff"></div>
<div class="t dt" style="left:382px;top:427px;background:#f0f0f0;padding:0 2px;letter-spacing:-0.06px"><u>N</u>euer Filter</div>
<!-- combos -->
<div class="sunk" style="left:384px;top:445px;width:95px;height:20px;background:#f0f0f0"></div>
<div class="t dt" style="left:388px;top:451px;color:#6d6d6d;letter-spacing:-0.3px">und</div>
<div class="btn" style="left:461px;top:447px;width:16px;height:16px"></div>
<div class="sunk" style="left:488px;top:445px;width:287px;height:20px"></div>
<div class="t dt" style="left:493px;top:451px;letter-spacing:-0.16px">Einkaufspreis</div>
<div class="btn" style="left:757px;top:447px;width:16px;height:16px"></div>
<div class="sunk" style="left:784px;top:445px;width:111px;height:20px"></div>
<div class="t dt" style="left:788px;top:451px;letter-spacing:-0.29px">&lt;Ausdruck&gt;</div>
<div class="btn" style="left:877px;top:447px;width:16px;height:16px"></div>
<svg style="left:355px;top:161px" width="570" height="446"><path d="M110 292 h7 l-3.5 4 Z" fill="#808080"/><path d="M406 292 h7 l-3.5 4 Z M526 292 h7 l-3.5 4 Z" fill="#000"/></svg>
<div class="t dt" style="left:384px;top:475px;letter-spacing:-0.03px">Wert, "Text", Ausdruck oder Aufzählung</div>
<div class="sunk" style="left:384px;top:489px;width:391px;height:19px"></div>
<div class="t dt" style="left:387px;top:494px;letter-spacing:-0.18px">&gt;= 5.00 and Einkaufspreis &lt;=10.00</div>
<div class="btn dt" style="left:784px;top:485px;width:112px;height:24px;line-height:24px;letter-spacing:-0.13px">Filter hin<u>z</u>ufügen</div>
<!-- bottom buttons -->
<div class="btn dis dt pressed" style="left:364px;top:543px;width:180px;height:23px;line-height:23px;letter-spacing:-0.11px"><u>F</u>ilter anwenden</div>
<div class="btn dt pressed" style="left:550px;top:543px;width:180px;height:23px;line-height:23px;letter-spacing:-0.08px">Farbfilter an<u>w</u>enden</div>
<div class="btn dis dt" style="left:736px;top:543px;width:180px;height:24px;line-height:24px;letter-spacing:-0.18px"><u>S</u>ortierung anwenden</div>
<div class="btn dt" style="left:364px;top:575px;width:180px;height:24px;line-height:24px;border-color:#000;box-shadow:inset -1px -1px 0 #696969,inset 1px 1px 0 #fff,inset -2px -2px 0 #a0a0a0;letter-spacing:0.05px">OK</div>
<div class="btn dt" style="left:550px;top:575px;width:180px;height:24px;line-height:24px;letter-spacing:-0.2px">Abbrechen</div>
<div class="btn dt" style="left:736px;top:575px;width:180px;height:24px;line-height:24px;letter-spacing:-0.35px">Ü<u>b</u>ernehmen</div>
</body></html>
